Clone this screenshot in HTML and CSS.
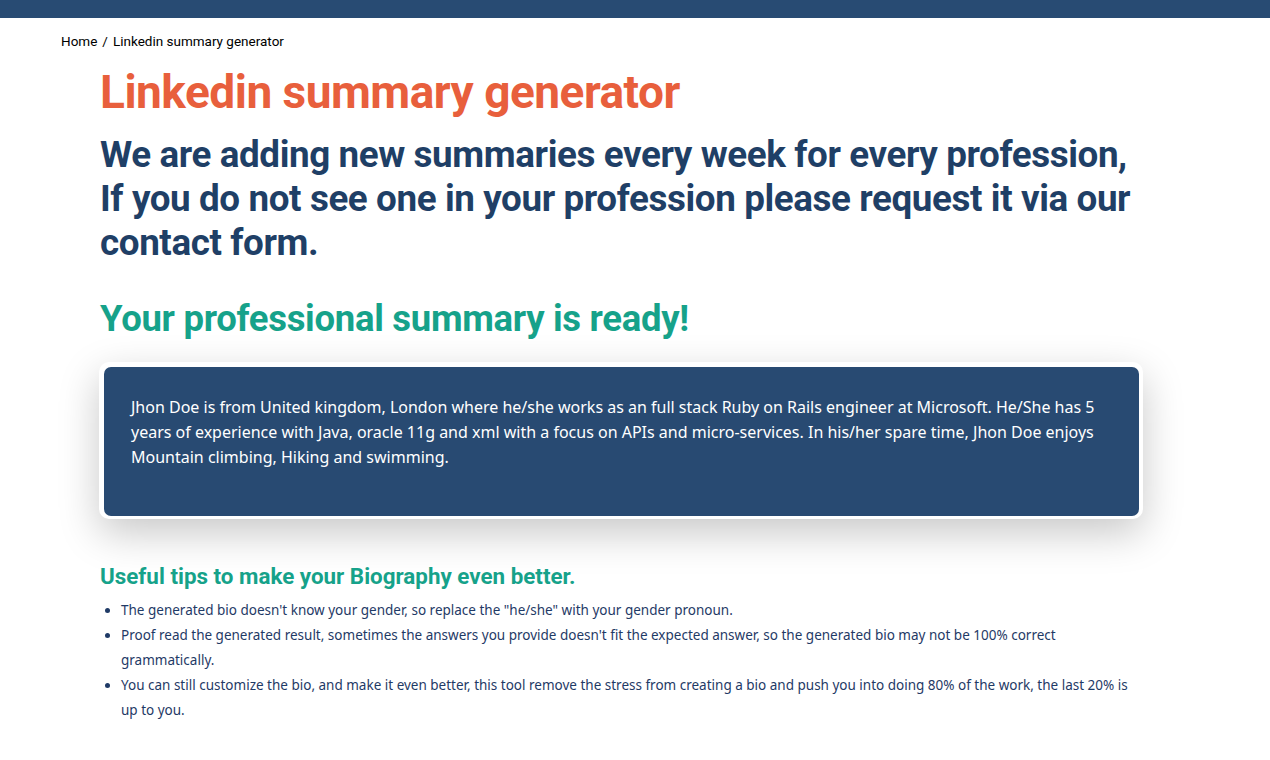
FILE: index.html
```html
<!DOCTYPE html>
<html lang="en">
<head>
<meta charset="utf-8">
<title>Linkedin summary generator</title>
<link rel="stylesheet" href="styles.css">
</head>
<body>
<header class="topbar"></header>
<nav class="breadcrumb"><a href="#">Home</a><span class="sep">/</span><span>Linkedin summary generator</span></nav>
<main class="content">
  <h1 class="title">Linkedin summary generator</h1>
  <h2 class="subtitle">We are adding new summaries every week for every profession, If you do not see one in your profession please request it via our contact form.</h2>
  <h2 class="ready">Your professional summary is ready!</h2>
  <div class="card">
    <div class="card-inner">Jhon Doe is from United kingdom, London where he/she works as an full stack Ruby on Rails engineer at Microsoft. He/She has 5 years of experience with Java, oracle 11g and xml with a focus on APIs and micro-services. In his/her spare time, Jhon Doe enjoys Mountain climbing, Hiking and swimming.</div>
  </div>
  <h3 class="tips-title">Useful tips to make your Biography even better.</h3>
  <ul class="tips">
    <li>The generated bio doesn't know your gender, so replace the "he/she" with your gender pronoun.</li>
    <li>Proof read the generated result, sometimes the answers you provide doesn't fit the expected answer, so the generated bio may not be 100% correct grammatically.</li>
    <li>You can still customize the bio, and make it even better, this tool remove the stress from creating a bio and push you into doing 80% of the work, the last 20% is up to you.</li>
  </ul>
</main>
</body>
</html>
```
FILE: styles.css
```css
* { box-sizing: border-box; }
body {
  margin: 0;
  background: #fff;
  font-family: "Noto Sans", "Open Sans", sans-serif;
}
.topbar {
  height: 18px;
  background: #284b73;
}
.breadcrumb {
  padding: 14px 0 0 61px;
  font-family: "Roboto", sans-serif;
  font-size: 13.5px;
  line-height: 18px;
  color: #000;
}
.breadcrumb a { color: #000; text-decoration: none; }
.breadcrumb .sep { margin: 0 5px; }
.content {
  width: 1044px;
  margin-left: 99px;
}
.title {
  margin: 14px 0 0 1px;
  font-family: "Roboto", sans-serif;
  font-weight: 700;
  font-size: 46px;
  line-height: 56px;
  letter-spacing: -0.5px;
  color: #e85f3c;
}
.subtitle {
  margin: 13px 0 0 1px;
  font-family: "Roboto", sans-serif;
  font-weight: 700;
  font-size: 36.8px;
  line-height: 44px;
  letter-spacing: -0.4px;
  color: #1f3f66;
}
.ready {
  margin: 32px 0 0 1px;
  font-family: "Roboto", sans-serif;
  font-weight: 700;
  font-size: 36.5px;
  line-height: 44px;
  letter-spacing: -0.3px;
  color: #16a28a;
}
.card {
  margin-top: 21px;
  padding: 5px 4px 3px 5px;
  background: #fff;
  border-radius: 10px;
  box-shadow: 0 14px 40px rgba(0,0,0,0.22);
}
.card-inner {
  background: #284a72;
  border-radius: 7px;
  color: #fff;
  font-size: 16px;
  line-height: 25px;
  padding: 28px 26px 46px 27px;
  min-height: 147px;
}
.tips-title {
  margin: 43px 0 0 1px;
  font-family: "Roboto", sans-serif;
  font-weight: 700;
  font-size: 22.4px;
  line-height: 28px;
  color: #16a28a;
}
.tips {
  margin: 8px 0 0 0;
  padding-left: 22px;
  font-size: 13.5px;
  line-height: 25px;
  color: #1f3a66;
}
```
